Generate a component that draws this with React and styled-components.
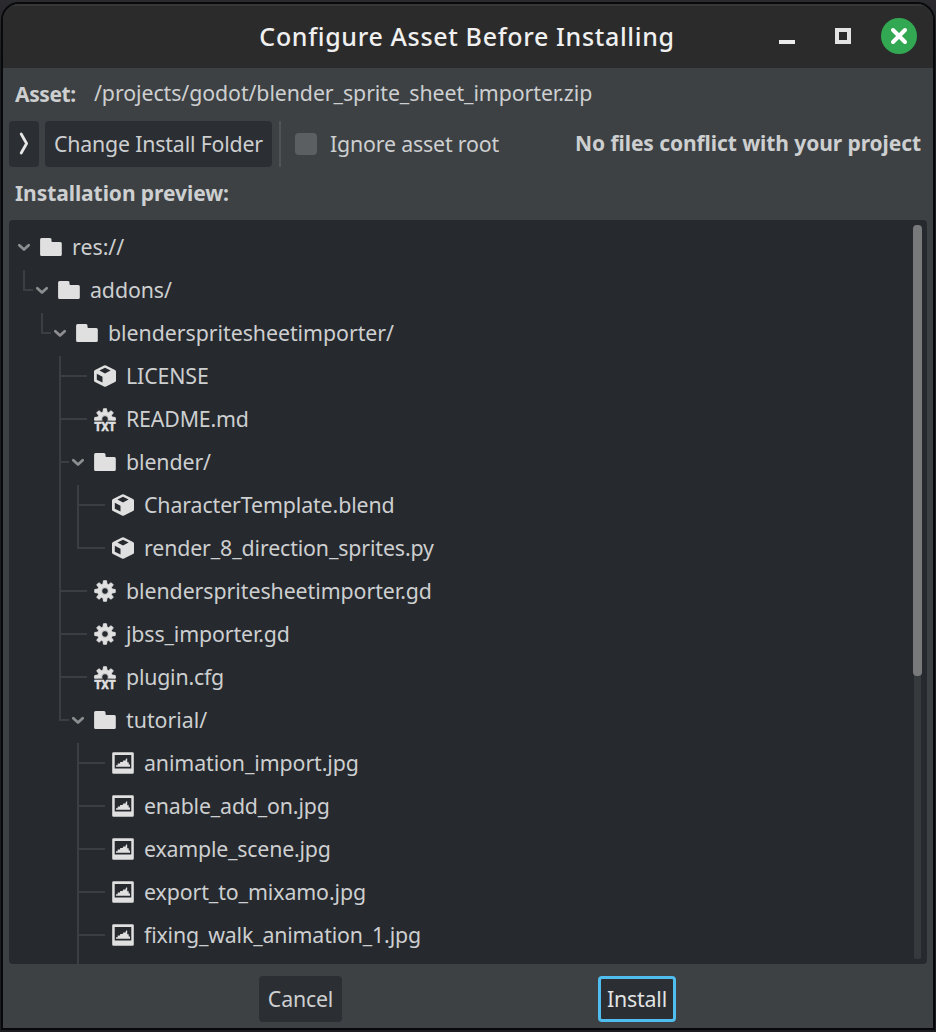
import React from "react";
import styled, { createGlobalStyle } from "styled-components";

const GlobalStyle = createGlobalStyle`
  * { box-sizing: border-box; }
  html, body { margin: 0; padding: 0; background: #202226; }
  #root { height: 1032px; overflow: hidden; }
`;

const Desktop = styled.div`
  width: 936px;
  height: 1032px;
  padding: 2px 1px 2px 1px;
  background: linear-gradient(#2a2a2f 0, #26262b 20px, #1a1c20 60px);
  font-family: "Noto Sans", "Open Sans", sans-serif;
  font-size: 21.33px;
  color: #cdcfd0;
`;

const Window = styled.main`
  display: flex;
  flex-direction: column;
  width: 934px;
  height: 1028px;
  border: 2px solid #08090b;
  border-radius: 18px 18px 0 0;
  background: #3d4144;
  overflow: hidden;
`;

const TitleBar = styled.header`
  display: grid;
  grid-template-columns: 1fr auto 1fr;
  align-items: center;
  height: 64px;
  flex: none;
  background: #2b2b2b;
  border-top: 2px solid #373737;
`;

const Title = styled.h1`
  grid-column: 2;
  margin: 0;
  padding: 0 2px 2px 0;
  font-size: 25px;
  font-weight: 500;
  line-height: 34px;
  letter-spacing: 0.66px;
  color: #f0f0f0;
  white-space: nowrap;
`;

const WindowControls = styled.div`
  display: flex;
  justify-content: flex-end;
  align-items: center;
  gap: 20px;
  padding: 0 16px 2px 0;
`;

const ControlButton = styled.button`
  display: grid;
  place-items: center;
  width: 36px;
  height: 36px;
  padding: 0;
  border: 0;
  border-radius: 50%;
  background: ${(p) => (p.$close ? "#33a852" : "transparent")};
`;

const AssetRow = styled.div`
  display: flex;
  height: 51px;
  padding-left: 12px;
  line-height: 50px;
`;

const Strong = styled.span`
  font-size: 21px;
  font-weight: 700;
  letter-spacing: ${(p) => p.$track || 0}px;
  white-space: nowrap;
`;

const AssetLabel = styled(Strong)`
  width: 79px;
  line-height: 52px;
`;

const Text = styled.span`
  letter-spacing: ${(p) => p.$track || 0}px;
  white-space: nowrap;
`;

const Toolbar = styled.div`
  display: flex;
  align-items: center;
  height: 46px;
  margin-top: 2px;
  padding: 0 12px 0 6px;
`;

const Status = styled(Strong)`
  padding-bottom: 3px;
`;

const Button = styled.button`
  display: flex;
  align-items: center;
  justify-content: center;
  width: ${(p) => p.$width}px;
  height: 46px;
  padding: 0 0 2px;
  border: 3px solid ${(p) => (p.$focus ? "#4fbdf0" : "#2b2e32")};
  border-radius: 4px;
  background: #2b2e32;
  color: ${(p) => (p.$focus ? "#e2e3e4" : "#cdcfd0")};
  font: inherit;
  letter-spacing: -0.18px;
  white-space: nowrap;
`;

const FolderButton = styled(Button)`
  margin-left: 6px;
`;

const Separator = styled.i`
  width: 2px;
  height: 46px;
  margin: 0 14px 0 7px;
  background: #505457;
`;

const CheckLabel = styled.div`
  display: flex;
  align-items: center;
  gap: 13px;
  flex: 1;
  padding-bottom: 1px;
`;

const CheckBox = styled.span`
  width: 22px;
  height: 22px;
  border-radius: 4px;
  background: #5c5f62;
`;

const PreviewLabel = styled.div`
  height: 53px;
  flex: none;
  padding-left: 12px;
  line-height: 52px;
`;

const Tree = styled.section`
  display: flex;
  justify-content: space-between;
  height: 744px;
  flex: none;
  margin: 0 6px;
  padding: 5px 5px 0 6px;
  border-radius: 4px;
  background: #26292e;
  overflow: hidden;
`;

const Rows = styled.div`
  display: flex;
  flex-direction: column;
`;

const Row = styled.div`
  display: flex;
  height: 43px;
  flex: none;
`;

const Cell = styled.span`
  display: block;
  position: relative;
  width: 18px;
  height: 43px;
  flex: none;
  padding-left: 8px;
`;

const Vertical = styled.i`
  display: block;
  width: 2px;
  height: ${(p) => (p.$end ? 21 : p.$first ? 41 : 43)}px;
  margin-top: ${(p) => (p.$first ? 2 : 0)}px;
  background: #3b3e42;
`;

const Branch = styled.i`
  position: absolute;
  top: 21px;
  left: 8px;
  width: ${(p) => (p.$short ? 10 : 28)}px;
  height: 2px;
  background: #3b3e42;
`;

const ArrowCell = styled.span`
  display: grid;
  place-items: center;
  width: 18px;
  height: 44px;
`;

const IconBox = styled.svg`
  display: block;
  width: 24px;
  height: 24px;
  flex: none;
  margin: 10px 0 0 6px;
  overflow: visible;
`;

const FileName = styled.span`
  padding-left: 9px;
  line-height: 43px;
  letter-spacing: ${(p) => p.$track || 0}px;
  white-space: nowrap;
`;

const ScrollTrack = styled.div`
  width: 9px;
  height: 734px;
  background: linear-gradient(90deg, transparent 1px, #373a3d 1px, #373a3d 8px, transparent 8px);
  border-radius: 4px;
`;

const ScrollThumb = styled.div`
  width: 9px;
  height: 451px;
  border-radius: 4px;
  background: #77797b;
`;

const Footer = styled.footer`
  display: flex;
  gap: 256px;
  padding: 12px 0 0 256px;
`;

function gearPath(cx, cy, teeth, outer, inner, half) {
  const pts = [];
  for (let i = 0; i < teeth; i++) {
    const a = (i * 2 * Math.PI) / teeth - Math.PI / 2;
    const wi = Math.asin(half / inner);
    const wo = Math.asin((half * 0.8) / outer);
    [[a - wi, inner], [a - wo, outer], [a + wo, outer], [a + wi, inner]].forEach(([t, r]) =>
      pts.push(`${(cx + r * Math.cos(t)).toFixed(2)} ${(cy + r * Math.sin(t)).toFixed(2)}`)
    );
  }
  return `M${pts.join("L")}Z`;
}

const gear = gearPath(12, 12, 8, 10.3, 7.3, 1.9) + "M15.4 12a3.4 3.4 0 1 0-6.8 0 3.4 3.4 0 0 0 6.8 0Z";

function Icon({ kind }) {
  return (
    <IconBox viewBox="0 0 24 24" fill="#e0e0e0">
      {kind === "folder" && (
        <path d="M2.6 3H11q1.5 0 1.5 1.5V6q0 1 1 1h7.8q1.5 0 1.5 1.5v11q0 1.5-1.5 1.5H2.6q-1.5 0-1.5-1.5v-15Q1.1 3 2.6 3Z" />
      )}
      {kind === "file" && (
        <path
          fillRule="evenodd"
          d="M11 1.6q1-.5 2 0l9 4.3q1 .5 1 1.5v9.2q0 1-1 1.5l-9 4.3q-1 .5-2 0l-9-4.3q-1-.5-1-1.5V7.4q0-1 1-1.5ZM12 3.8 6.4 6.6 12 9.4l5.600-2.800ZM3.800 9.800v5.900l5.700 2.900v-5.900Z"
        />
      )}
      {kind === "script" && (
        <path fillRule="evenodd" stroke="#e0e0e0" strokeWidth="1" strokeLinejoin="round" d={gear} />
      )}
      {kind === "text" && (
        <>
          <clipPath id="upperGear">
            <rect width="24" height="13.6" />
          </clipPath>
          <g clipPath="url(#upperGear)">
            <path fillRule="evenodd" stroke="#e0e0e0" strokeWidth="1" strokeLinejoin="round" d={gear} />
            <path d="M1.2 11.6h6.800v2H1.200ZM16 11.600h6.800v2H16Z" />
          </g>
          <text
            x="1.500"
            y="23.600"
            fontFamily="DejaVu Sans, sans-serif"
            fontSize="11.500"
            fontWeight="700"
            stroke="#e0e0e0"
            strokeWidth="0.500"
            textLength="21"
            lengthAdjust="spacingAndGlyphs"
          >
            TXT
          </text>
        </>
      )}
      {kind === "image" && (
        <>
          <path
            fillRule="evenodd"
            d="M2.500 1.200h19q1.300 0 1.300 1.300v19q0 1.300-1.300 1.300h-19q-1.300 0-1.300-1.300v-19q0-1.300 1.300-1.300ZM3.700 4v13.500h16.600V4Z"
          />
          <path d="M5 15.800v-1.600h1.700v-1.600h2.400v-1.500h2.500l1.300-2 1.200.8 1-2.300h1.100v3.600h1.500v2.400H19v2.200Z" />
        </>
      )}
    </IconBox>
  );
}

function Arrow() {
  return (
    <svg width="18" height="18" viewBox="0 0 18 18" fill="none" stroke="#8c8e90" strokeWidth="2.7" strokeLinecap="round" strokeLinejoin="round">
      <path d="m4.300 7.200 4.700 4.400 4.700-4.400" />
    </svg>
  );
}

// guides: one letter per indent column. "." empty, "|" passing line,
// "f" first child, "m" middle child, "l" last child, "o" only child
const rows = [
  { guides: "", kind: "folder", name: "res://", open: true, track: 0 },
  { guides: "o", kind: "folder", name: "addons/", open: true, track: -0.1 },
  { guides: ".o", kind: "folder", name: "blenderspritesheetimporter/", open: true, track: -0.04 },
  { guides: "..f", kind: "file", name: "LICENSE", track: -0.12 },
  { guides: "..m", kind: "text", name: "README.md", track: -0.17 },
  { guides: "..m", kind: "folder", name: "blender/", open: true, track: -0.1 },
  { guides: "..|f", kind: "file", name: "CharacterTemplate.blend", track: -0.11 },
  { guides: "..|l", kind: "file", name: "render_8_direction_sprites.py", track: -0.13 },
  { guides: "..m", kind: "script", name: "blenderspritesheetimporter.gd", track: -0.06 },
  { guides: "..m", kind: "script", name: "jbss_importer.gd", track: -0.13 },
  { guides: "..m", kind: "text", name: "plugin.cfg", track: -0.2 },
  { guides: "..l", kind: "folder", name: "tutorial/", open: true, track: 0 },
  { guides: "...f", kind: "image", name: "animation_import.jpg", track: -0.1 },
  { guides: "...m", kind: "image", name: "enable_add_on.jpg", track: -0.17 },
  { guides: "...m", kind: "image", name: "example_scene.jpg", track: -0.2 },
  { guides: "...m", kind: "image", name: "export_to_mixamo.jpg", track: -0.1 },
  { guides: "...m", kind: "image", name: "fixing_walk_animation_1.jpg", track: -0.17 },
];

function TreeRow({ guides, kind, name, open, track }) {
  return (
    <Row>
      {[...guides].map((g, i) => (
        <Cell key={i}>
          {g !== "." && <Vertical $first={g === "f" || g === "o"} $end={g === "l" || g === "o"} />}
          {"fmlo".includes(g) && <Branch $short={open} />}
        </Cell>
      ))}
      <ArrowCell>{open && <Arrow />}</ArrowCell>
      <Icon kind={kind} />
      <FileName $track={track}>{name}</FileName>
    </Row>
  );
}

export default function App() {
  return (
    <>
      <GlobalStyle />
      <Desktop>
        <Window>
          <TitleBar>
            <Title>Configure Asset Before Installing</Title>
            <WindowControls>
              <ControlButton aria-label="Minimize">
                <svg width="16" height="16" viewBox="0 0 16 16"><path d="M0 12h16v4H0z" fill="#ececec" /></svg>
              </ControlButton>
              <ControlButton aria-label="Maximize">
                <svg width="16" height="16" viewBox="0 0 16 16"><path d="M2 2h12v12H2z" fill="none" stroke="#e4e4e4" strokeWidth="4" /></svg>
              </ControlButton>
              <ControlButton $close aria-label="Close">
                <svg width="18" height="18" viewBox="0 0 18 18"><path d="m3 3 12 12M15 3 3 15" stroke="#fff" strokeWidth="4" strokeLinecap="round" /></svg>
              </ControlButton>
            </WindowControls>
          </TitleBar>
          <AssetRow>
            <AssetLabel $track={-0.4}>Asset:</AssetLabel>
            <Text $track={-0.08}>/projects/godot/blender_sprite_sheet_importer.zip</Text>
          </AssetRow>
          <Toolbar>
            <Button $width={30} aria-label="Show source files">
              <svg width="14" height="24" viewBox="0 0 14 24" fill="none" stroke="#e6e6e6" strokeWidth="2.8" strokeLinecap="round" strokeLinejoin="round">
                <path d="m4.200 3 5.400 9.500-5.400 9.500" />
              </svg>
            </Button>
            <FolderButton $width={227}>Change Install Folder</FolderButton>
            <Separator />
            <CheckLabel>
              <CheckBox />
              <Text $track={-0.17}>Ignore asset root</Text>
            </CheckLabel>
            <Status $track={-0.08}>No files conflict with your project</Status>
          </Toolbar>
          <PreviewLabel>
            <Strong $track={-0.07}>Installation preview:</Strong>
          </PreviewLabel>
          <Tree>
            <Rows>
              {rows.map((row) => (
                <TreeRow key={row.name} {...row} />
              ))}
              <Row>
                {[0, 1, 2].map((i) => <Cell key={i} />)}
                <Cell><Vertical /></Cell>
              </Row>
            </Rows>
            <ScrollTrack>
              <ScrollThumb />
            </ScrollTrack>
          </Tree>
          <Footer>
            <Button $width={83}>Cancel</Button>
            <Button $width={78} $focus>Install</Button>
          </Footer>
        </Window>
      </Desktop>
    </>
  );
}
